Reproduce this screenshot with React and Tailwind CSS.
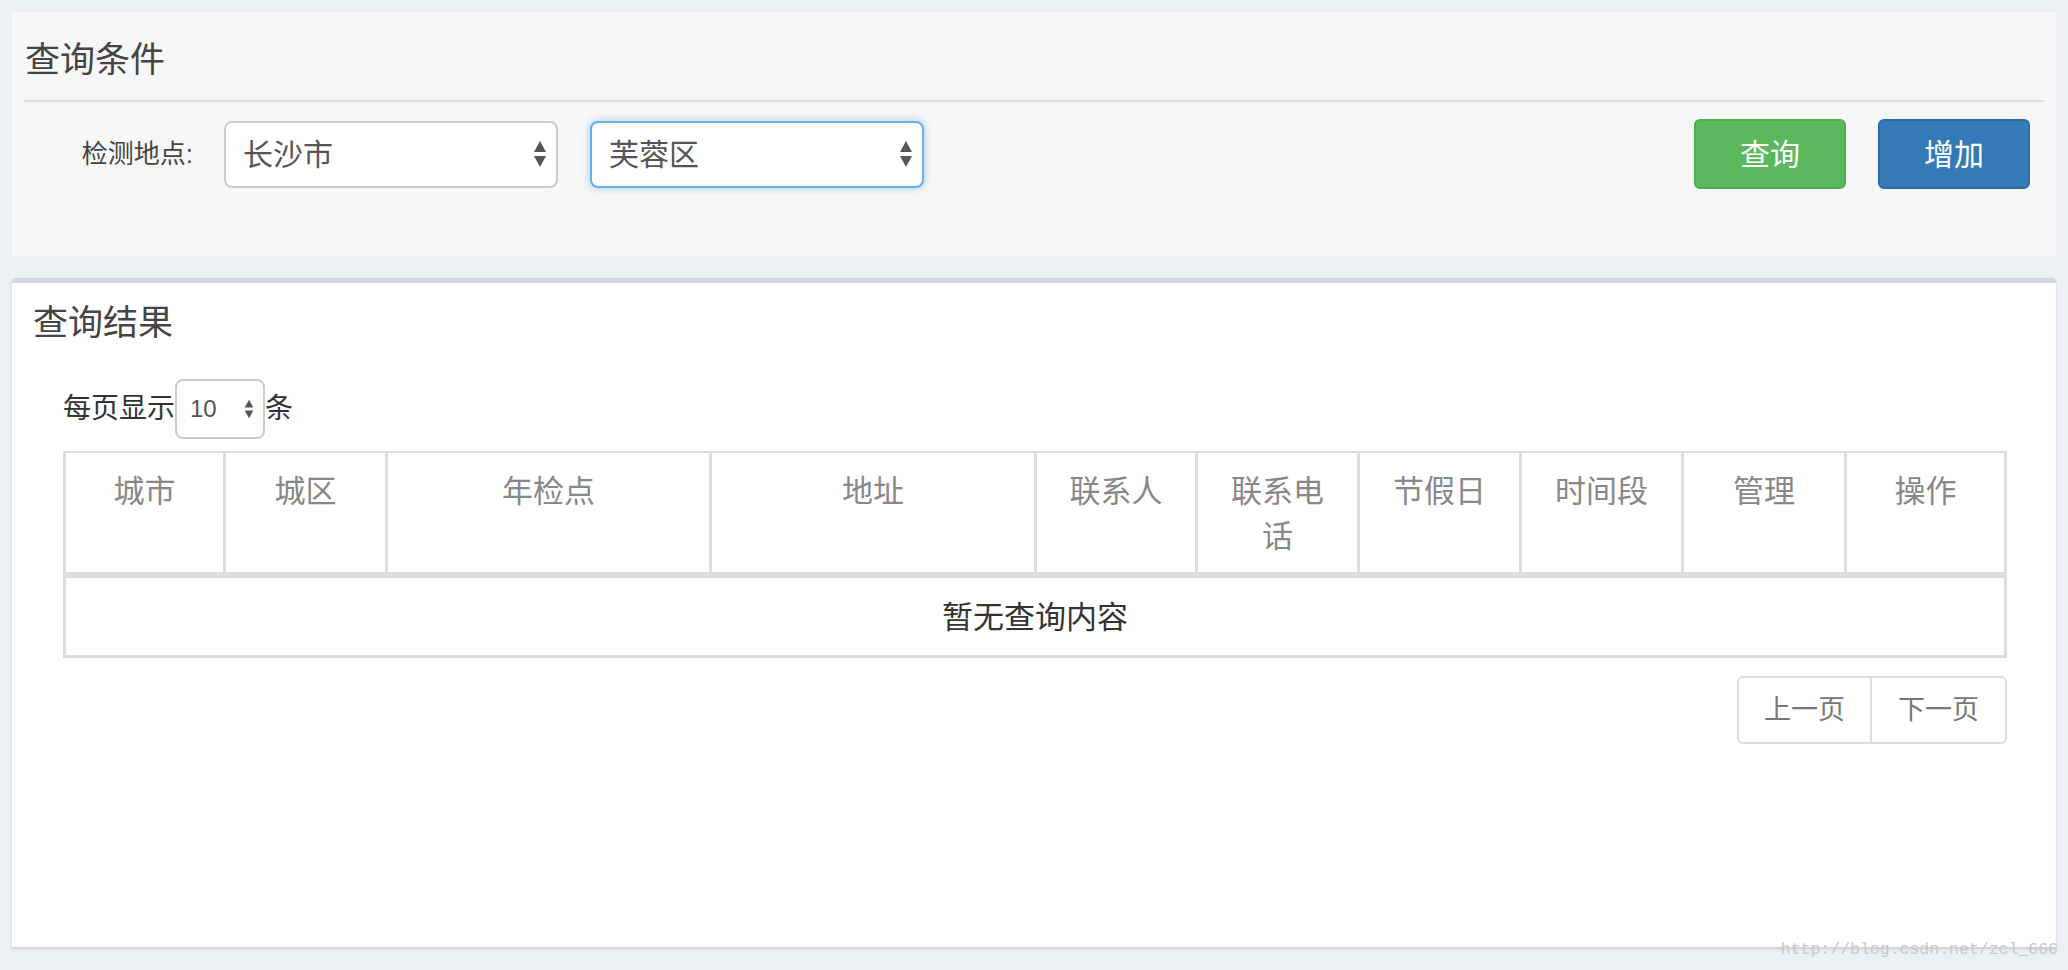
import React from 'react';

const font = { fontFamily: '"Liberation Sans", "Noto Sans CJK SC", sans-serif' };

const Arrows = ({ small }) => (
  <svg
    width={small ? 10 : 14}
    height={small ? 20 : 28}
    viewBox="0 0 14 28"
    className="shrink-0"
  >
    <path d="M7 1 L13 12 L1 12 Z" fill="#555" />
    <path d="M7 27 L13 16 L1 16 Z" fill="#555" />
  </svg>
);

const FakeSelect = ({ value, focused }) => (
  <div
    className={`flex h-[67px] w-[334px] items-center justify-between rounded-[8px] border-2 bg-white pl-[17px] pr-[9px] text-[30px] text-[#555] ${
      focused
        ? 'border-[#66afe9] shadow-[0_0_8px_rgba(102,175,233,0.6)]'
        : 'border-[#cccccc]'
    }`}
  >
    <span>{value}</span>
    <Arrows />
  </div>
);

const columns = [
  { name: '城市', w: 'w-[160px]' },
  { name: '城区', w: 'w-[162px]' },
  { name: '年检点', w: 'w-[324px]' },
  { name: '地址', w: 'w-[325px]' },
  { name: '联系人', w: 'w-[161px]' },
  { name: '联系电话', w: 'w-[162px]' },
  { name: '节假日', w: 'w-[162px]' },
  { name: '时间段', w: 'w-[162px]' },
  { name: '管理', w: 'w-[163px]' },
  { name: '操作', w: 'w-[160px]' },
];

export default function App() {
  return (
    <div className="relative min-h-[970px] bg-[#ecf0f5] px-[12px] pt-[12px]" style={font}>
      {/* query conditions */}
      <div className="h-[244px] bg-[#f7f7f7] px-[12px] pt-[27px]">
        <h3 className="pl-[1px] text-[35px] leading-[42px] text-[#444]">查询条件</h3>
        <div className="mt-[19px] h-[2px] bg-[#dcdcdc]" />
        <div className="mt-[17px] flex h-[70px] items-center">
          <div className="w-[169px] text-right text-[26px] text-[#444]">检测地点:</div>
          <div className="ml-[31px] flex gap-[32px]">
            <FakeSelect value="长沙市" />
            <FakeSelect value="芙蓉区" focused />
          </div>
          <div className="ml-auto mr-[14px] flex gap-[32px]">
            <button className="h-[70px] w-[152px] rounded-[6px] border-2 border-[#4cae4c] bg-[#5cb85c] text-[30px] text-white">
              查询
            </button>
            <button className="h-[70px] w-[152px] rounded-[6px] border-2 border-[#2e6da4] bg-[#337ab7] text-[30px] text-white">
              增加
            </button>
          </div>
        </div>
      </div>

      {/* results */}
      <div className="mt-[22px] h-[669px] rounded-t-[4px] border-t-[5px] border-[#d2d6de] bg-white shadow-[0_2px_3px_rgba(0,0,0,0.15)]">
        <h3 className="pl-[21px] pt-[19px] text-[35px] leading-[42px] text-[#444]">查询结果</h3>
        <div className="pl-[51px] pr-[49px]">
          <div className="mt-[35px] flex h-[60px] items-center text-[28px] text-[#333]">
            <span>每页显示</span>
            <div className="flex h-[60px] w-[90px] items-center justify-between rounded-[8px] border-2 border-[#cccccc] bg-white pl-[13px] pr-[9px] text-[24px] text-[#555]">
              <span>10</span>
              <Arrows small />
            </div>
            <span>条</span>
          </div>

          <table className="mt-[12px] w-full table-fixed border-separate border-spacing-0 border-l-[3px] border-t-[2px] border-[#dddddd]">
            <colgroup>
              {columns.map((c) => (
                <col key={c.name} className={c.w} />
              ))}
            </colgroup>
            <thead>
              <tr>
                {columns.map((c) => (
                  <th
                    key={c.name}
                    className="border-b-[6px] border-r-[3px] border-[#dddddd] px-[22px] pb-[13px] pt-[16px] align-top text-[31px] font-normal leading-[45px] text-[#888]"
                  >
                    {c.name}
                  </th>
                ))}
              </tr>
            </thead>
            <tbody>
              <tr>
                <td
                  colSpan={10}
                  className="border-b-[3px] border-r-[3px] border-[#dddddd] pb-[15px] pt-[17px] text-center text-[31px] leading-[45px] text-[#333]"
                >
                  暂无查询内容
                </td>
              </tr>
            </tbody>
          </table>

          <div className="mt-[18px] flex justify-end">
            <div className="flex h-[68px] rounded-[6px] border-2 border-[#dddddd] text-[27px] text-[#777]">
              <div className="flex w-[133px] items-center justify-center border-r-2 border-[#dddddd]">上一页</div>
              <div className="flex w-[133px] items-center justify-center">下一页</div>
            </div>
          </div>
        </div>
      </div>

      <div
        className="absolute right-[10px] top-[938px] text-[16.5px] text-[#c8c8c8]"
        style={{ fontFamily: '"Liberation Mono", monospace' }}
      >
        http://blog.csdn.net/zcl_666
      </div>
    </div>
  );
}
